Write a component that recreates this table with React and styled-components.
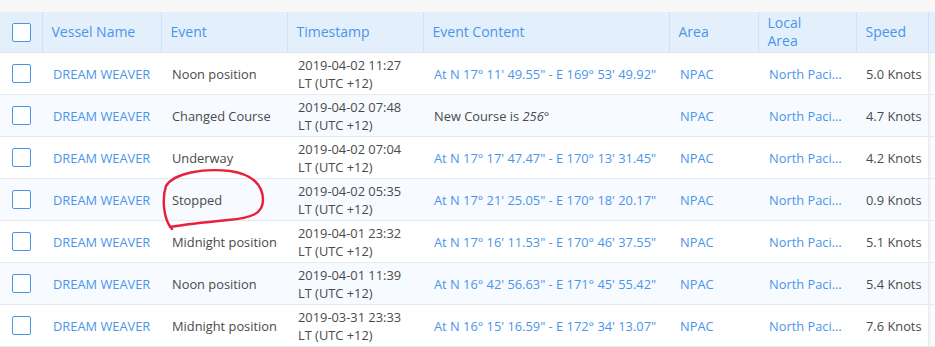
import styled, { createGlobalStyle } from 'styled-components';

const GlobalStyle = createGlobalStyle`
	body {
		margin: 0;
		background: #ffffff;
		font-family: 'Open Sans', 'Noto Sans', sans-serif;
	}
`;

const Page = styled.div`
	position: relative;
	width: 935px;
	height: 347px;
	overflow: hidden;
	background: #f7f7f7;
	padding-top: 12px;
	box-sizing: border-box;
`;

const Table = styled.table`
	border-collapse: collapse;
	table-layout: fixed;
	width: 960px;
	font-size: 12.85px;
`;

const HeadCell = styled.th`
	height: 40px;
	padding: 0 9px;
	text-align: left;
	font-weight: 400;
	font-size: 14px;
	line-height: 18px;
	color: #4a95ea;
	background: #e4effc;
	border-right: 1px solid #cfe1f6;
	border-bottom: 1px solid #dbe4ee;
	vertical-align: middle;
`;

const Row = styled.tr`
	background: ${({ $alt }) => ($alt ? '#f7faff' : '#ffffff')};
`;

const Cell = styled.td`
	height: 41px;
	padding: 0 ${({ $clip }) => ($clip ? 12 : 2)}px 0 ${({ $pad }) => $pad || 11}px;
	border-bottom: 1px solid #e6e9ee;
	color: ${({ $link }) => ($link ? '#4a95ea' : '#4a4a4a')};
	line-height: 18px;
	vertical-align: middle;
	white-space: ${({ $wrap }) => ($wrap ? 'normal' : 'nowrap')};
	overflow: ${({ $clip }) => ($clip ? 'hidden' : 'visible')};
	text-overflow: ${({ $clip }) => ($clip ? 'ellipsis' : 'clip')};
`;

const EdgeCell = styled.td`
	border-bottom: 1px solid #e6e9ee;
	border-left: 1px solid #e8ebef;
	background: #fafbfc;
	box-shadow: inset 3px 0 3px -2px rgba(0, 0, 0, 0.05);
`;

const Box = styled.span`
	display: block;
	width: 17px;
	height: 17px;
	border: 1px solid #4a95ea;
	border-radius: 2px;
	background: #ffffff;
	margin-left: 3px;
`;

const Annotation = styled.svg`
	position: absolute;
	left: 0;
	top: 0;
	pointer-events: none;
`;

const rows = [
	['Noon position', '2019-04-02 11:27', 'At N 17° 11\' 49.55" - E 169° 53\' 49.92"', '5.0'],
	['Changed Course', '2019-04-02 07:48', null, '4.7'],
	['Underway', '2019-04-02 07:04', 'At N 17° 17\' 47.47" - E 170° 13\' 31.45"', '4.2'],
	['Stopped', '2019-04-02 05:35', 'At N 17° 21\' 25.05" - E 170° 18\' 20.17"', '0.9'],
	['Midnight position', '2019-04-01 23:32', 'At N 17° 16\' 11.53" - E 170° 46\' 37.55"', '5.1'],
	['Noon position', '2019-04-01 11:39', 'At N 16° 42\' 56.63" - E 171° 45\' 55.42"', '5.4'],
	['Midnight position', '2019-03-31 23:33', 'At N 16° 15\' 16.59" - E 172° 34\' 13.07"', '7.6'],
];

const App = () => (
	<>
		<GlobalStyle />
		<Page>
			<Table>
				<colgroup>
					<col style={{ width: 42 }} />
					<col style={{ width: 119 }} />
					<col style={{ width: 126 }} />
					<col style={{ width: 136 }} />
					<col style={{ width: 246 }} />
					<col style={{ width: 89 }} />
					<col style={{ width: 98 }} />
					<col style={{ width: 72 }} />
					<col style={{ width: 32 }} />
				</colgroup>
				<thead>
					<tr>
						<HeadCell>
							<Box />
						</HeadCell>
						<HeadCell>Vessel Name</HeadCell>
						<HeadCell>Event</HeadCell>
						<HeadCell>Timestamp</HeadCell>
						<HeadCell>Event Content</HeadCell>
						<HeadCell>Area</HeadCell>
						<HeadCell>
							Local
							<br />
							Area
						</HeadCell>
						<HeadCell>Speed</HeadCell>
						<HeadCell />
					</tr>
				</thead>
				<tbody>
					{rows.map(([event, time, content, speed], i) => (
						<Row key={i} $alt={i % 2 === 1}>
							<Cell $pad={9}>
								<Box />
							</Cell>
							<Cell $link>DREAM WEAVER</Cell>
							<Cell>{event}</Cell>
							<Cell $wrap>
								{time}
								<br />
								LT (UTC +12)
							</Cell>
							{content ? (
								<Cell $link>{content}</Cell>
							) : (
								<Cell>
									New Course is <i>256°</i>
								</Cell>
							)}
							<Cell $link>NPAC</Cell>
							<Cell $link $clip>
								North Pacific Ocean
							</Cell>
							<Cell $pad={10}>{speed} Knots</Cell>
							<EdgeCell />
						</Row>
					))}
				</tbody>
			</Table>
			<Annotation width="935" height="347">
				<path
					d="M172 229 C163 219, 162 198, 166 186 C174 173, 203 168, 230 171 C252 174, 263 185, 263 200 C263 214, 251 218, 228 220 C208 222, 188 224, 170 227"
					fill="none"
					stroke="#ea1f3d"
					strokeWidth="2.4"
					strokeLinecap="round"
				/>
			</Annotation>
		</Page>
	</>
);

export default App;
